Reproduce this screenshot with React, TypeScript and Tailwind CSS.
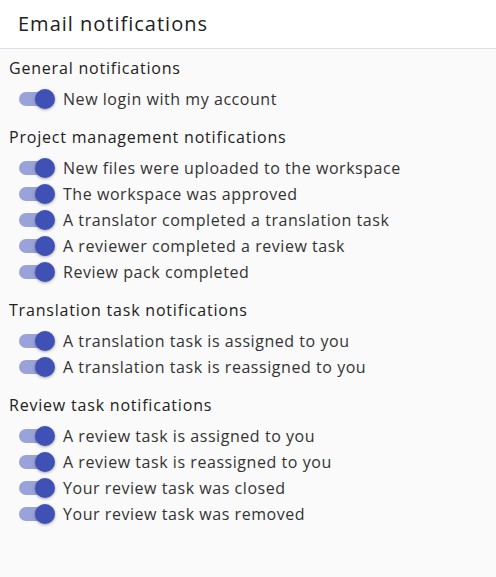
const sections = [
  { title: "General notifications", items: ["New login with my account"] },
  {
    title: "Project management notifications",
    items: [
      "New files were uploaded to the workspace",
      "The workspace was approved",
      "A translator completed a translation task",
      "A reviewer completed a review task",
      "Review pack completed",
    ],
  },
  {
    title: "Translation task notifications",
    items: ["A translation task is assigned to you", "A translation task is reassigned to you"],
  },
  {
    title: "Review task notifications",
    items: [
      "A review task is assigned to you",
      "A review task is reassigned to you",
      "Your review task was closed",
      "Your review task was removed",
    ],
  },
];

function Toggle() {
  return (
    <div className="relative w-[38px] h-[26px] shrink-0 flex items-center">
      <div className="absolute left-0 top-[6px] w-[34px] h-[14px] rounded-full bg-[#9aa3d9]" />
      <div className="absolute left-[16px] top-[3px] w-[20px] h-[20px] rounded-full bg-[#3f51b5] shadow-[0_1px_3px_rgba(0,0,0,0.35)]" />
    </div>
  );
}

export default function App() {
  return (
    <div className="w-[496px] h-[577px] bg-[#fafafa] text-[#212121] font-['Open_Sans',sans-serif] flex flex-col">
      <div className="h-[49px] bg-white border-b border-[#e0e0e0] flex items-center px-[18px]">
        <h1 className="text-[20px] tracking-[1px]">Email notifications</h1>
      </div>
      <div className="pl-[9px] pt-[7px] flex flex-col gap-[13px]">
        {sections.map((s) => (
          <div key={s.title}>
            <div className="text-[16px] leading-[24px] tracking-[0.8px]">{s.title}</div>
            <div className="mt-[6px] pl-[10px] flex flex-col">
              {s.items.map((it) => (
                <div key={it} className="h-[26px] flex items-center gap-[6px]">
                  <Toggle />
                  <span className="text-[16px] text-[#333] tracking-[0.55px]">{it}</span>
                </div>
              ))}
            </div>
          </div>
        ))}
      </div>
    </div>
  );
}
